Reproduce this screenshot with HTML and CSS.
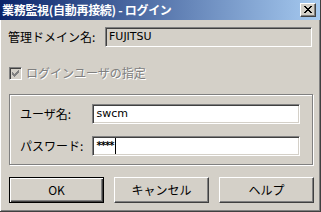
FILE: index.html
```html
<!DOCTYPE html>
<html lang="ja">
<head>
<meta charset="utf-8">
<title>業務監視(自動再接続) - ログイン</title>
<link rel="stylesheet" href="styles.css">
</head>
<body>
<div class="window">
  <div class="titlebar">
    <span class="title">業務監視(自動再接続) - ログイン</span>
    <span class="close">
      <svg width="8" height="7" viewBox="0 0 8 7" shape-rendering="crispEdges">
        <rect x="0" y="0" width="2" height="1"/><rect x="6" y="0" width="2" height="1"/>
        <rect x="1" y="1" width="2" height="1"/><rect x="5" y="1" width="2" height="1"/>
        <rect x="2" y="2" width="4" height="1"/>
        <rect x="3" y="3" width="2" height="1"/>
        <rect x="2" y="4" width="4" height="1"/>
        <rect x="1" y="5" width="2" height="1"/><rect x="5" y="5" width="2" height="1"/>
        <rect x="0" y="6" width="2" height="1"/><rect x="6" y="6" width="2" height="1"/>
      </svg>
    </span>
  </div>
  <div class="content">
    <div class="domain-row">
      <span class="label">管理ドメイン名:</span>
      <div class="field readonly">FUJITSU</div>
    </div>
    <div class="check-row">
      <span class="checkbox">
        <svg width="7" height="7" viewBox="0 0 7 7" shape-rendering="crispEdges">
          <rect x="6" y="0" width="1" height="1"/>
          <rect x="5" y="1" width="2" height="1"/>
          <rect x="0" y="2" width="1" height="1"/><rect x="4" y="2" width="3" height="1"/>
          <rect x="0" y="3" width="2" height="1"/><rect x="3" y="3" width="3" height="1"/>
          <rect x="0" y="4" width="5" height="1"/>
          <rect x="1" y="5" width="3" height="1"/>
          <rect x="2" y="6" width="1" height="1"/>
        </svg>
      </span>
      <span class="check-text">ログインユーザの指定</span>
    </div>
    <div class="group">
      <div class="group-row">
        <span class="group-label">ユーザ名:</span>
        <div class="field">swcm</div>
      </div>
      <div class="group-row">
        <span class="group-label">パスワード:</span>
        <div class="field"><span class="pw">****</span><span class="caret"></span></div>
      </div>
    </div>
    <div class="buttons">
      <div class="btn default">OK</div>
      <div class="btn">キャンセル</div>
      <div class="btn">ヘルプ</div>
    </div>
  </div>
</div>
</body>
</html>
```

FILE: styles.css
```css
html, body {
  margin: 0;
  padding: 0;
  background: #d4d0c8;
}
body {
  font-family: "Noto Sans CJK JP", "DejaVu Sans", sans-serif;
  font-size: 12px;
  color: #000;
}
.window {
  width: 321px;
  height: 212px;
  box-sizing: border-box;
  background: #d4d0c8;
  display: flex;
  flex-direction: column;
  border-right: 1px solid #404040;
  border-bottom: 1px solid #404040;
  box-shadow: inset -1px -1px 0 #808080;
  overflow: hidden;
}
.titlebar {
  height: 20px;
  background: linear-gradient(to right, #0a246a, #a6caf0);
  display: flex;
  align-items: center;
  justify-content: space-between;
  padding: 0 4px 0 2px;
  flex-shrink: 0;
}
.title {
  color: #fff;
  font-weight: bold;
  font-size: 12px;
  line-height: 14px;
  letter-spacing: -0.3px;
  white-space: nowrap;
}
.close {
  width: 16px;
  height: 14px;
  box-sizing: border-box;
  background: #d4d0c8;
  border-top: 1px solid #fff;
  border-left: 1px solid #fff;
  border-right: 1px solid #404040;
  border-bottom: 1px solid #404040;
  box-shadow: inset -1px -1px 0 #808080;
  display: flex;
  align-items: center;
  justify-content: center;
  padding: 0 1px 1px 0;
}
.close svg { display: block; fill: #000; }
.content {
  flex: 1;
  display: flex;
  flex-direction: column;
  padding: 7px 7px 0 8px;
  border-left: 1px solid #fff;
}
.domain-row {
  display: flex;
  align-items: center;
  height: 20px;
}
.label {
  width: 97px;
  margin-left: -1px;
  white-space: nowrap;
  line-height: 20px;
}
.field {
  box-sizing: border-box;
  height: 20px;
  background: #fff;
  border-top: 1px solid #808080;
  border-left: 1px solid #808080;
  border-right: 1px solid #fff;
  border-bottom: 1px solid #fff;
  box-shadow: inset 1px 1px 0 #404040, inset -1px -1px 0 #d4d0c8;
  padding: 0 2px 0 3px;
  line-height: 18px;
  display: flex;
  align-items: center;
  font-family: "DejaVu Sans", "Noto Sans CJK JP", sans-serif;
  font-size: 11px;
}
.domain-row .field {
  width: 207px;
  background: #d4d0c8;
}
.check-row {
  display: flex;
  align-items: center;
  margin-top: 19px;
  height: 14px;
}
.checkbox {
  width: 13px;
  height: 13px;
  box-sizing: border-box;
  background: #d4d0c8;
  border-top: 1px solid #808080;
  border-left: 1px solid #808080;
  border-right: 1px solid #fff;
  border-bottom: 1px solid #fff;
  box-shadow: inset 1px 1px 0 #404040, inset -1px -1px 0 #d4d0c8;
  display: flex;
  align-items: center;
  justify-content: center;
}
.checkbox svg { display: block; fill: #808080; }
.check-text {
  margin-left: 4px;
  color: #808080;
  text-shadow: 1px 1px 0 #fff;
  line-height: 14px;
  white-space: nowrap;
}
.group {
  margin-top: 14px;
  width: 304px;
  height: 71px;
  box-sizing: border-box;
  border: 1px solid #808080;
  box-shadow: inset 1px 1px 0 #fff, 1px 1px 0 #fff;
  display: flex;
  flex-direction: column;
  gap: 12px;
  padding: 9px 12px 0 10px;
}
.group-row {
  display: flex;
  align-items: center;
  height: 20px;
}
.group-label {
  width: 73px;
  white-space: nowrap;
  line-height: 20px;
}
.group-row .field {
  width: 209px;
}
.pw {
  font-size: 10px;
  letter-spacing: -1px;
  font-weight: bold;
}
.caret {
  display: inline-block;
  width: 1px;
  height: 16px;
  background: #000;
  margin-left: 2px;
}
.buttons {
  display: flex;
  gap: 10px;
  margin-top: 12px;
  width: 305px;
}
.btn {
  flex: 1;
  height: 26px;
  box-sizing: border-box;
  display: flex;
  align-items: center;
  justify-content: center;
  border-top: 1px solid #fff;
  border-left: 1px solid #fff;
  border-right: 1px solid #404040;
  border-bottom: 1px solid #404040;
  box-shadow: inset -1px -1px 0 #808080;
  padding-bottom: 1px;
  white-space: nowrap;
  font-weight: 400;
}
.btn.default {
  border: 1px solid #000;
  box-shadow: inset 1px 1px 0 #fff, inset -1px -1px 0 #404040, inset -2px -2px 0 #808080;
}
```
